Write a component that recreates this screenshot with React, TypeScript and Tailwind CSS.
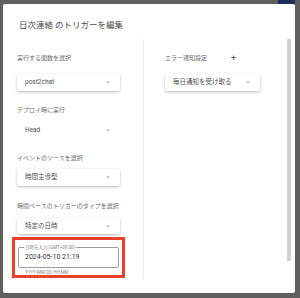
import React from 'react'

const font = { fontFamily: 'Roboto, "Noto Sans CJK JP", sans-serif' }

function Caret() {
  return (
    <svg width="4" height="3" viewBox="0 0 4 3" className="shrink-0">
      <path d="M0 0.5h4L2 2.5z" fill="#b4b4b4" />
    </svg>
  )
}

function Select({ value, className = '' }: { value: string; className?: string }) {
  return (
    <div
      className={`flex items-center justify-between rounded-[2px] bg-white pl-[8px] pr-[10px] shadow-[0_1px_3px_rgba(0,0,0,0.28)] ${className}`}
    >
      <span className="text-[6.5px] leading-none text-[#505050]">{value}</span>
      <Caret />
    </div>
  )
}

function Label({ children, className = '' }: { children: React.ReactNode; className?: string }) {
  return <div className={`h-[8px] text-[6px] leading-[8px] text-[#6a6a6a] ${className}`}>{children}</div>
}

export default function App() {
  return (
    <div className="h-[298px] w-[300px] overflow-hidden bg-[#5f5f5f]" style={font}>
      <div className="flex h-[4px] justify-end pr-[5px]">
        <div className="h-[4px] w-[17px] bg-[#1c2f5a]" />
      </div>
      <div className="ml-[3px] flex h-[289px] w-[292px] flex-col rounded-[2px] bg-white">
        <h1 className="ml-[16px] mt-[15px] h-[12px] text-[8.5px] leading-[12px] text-[#4a4a4a]">
          日次連絡 のトリガーを編集
        </h1>

        <div className="mt-[8px] flex">
          {/* left column */}
          <div className="flex w-[140px] flex-col pl-[14px]">
            <Label className="mt-[15px]">実行する関数を選択</Label>
            <Select value="post2chat" className="mt-[12px] h-[17px] w-[103px]" />

            <Label className="mt-[15px]">デプロイ時に実行</Label>
            <div className="mt-[8px] flex h-[17px] w-[103px] items-center justify-between pl-[8px] pr-[10px]">
              <span className="text-[6.5px] leading-none text-[#505050]">Head</span>
              <Caret />
            </div>

            <Label className="mt-[15px]">イベントのソースを選択</Label>
            <Select value="時間主導型" className="mt-[7px] h-[17px] w-[103px]" />

            <Label className="mt-[16px]">時間ベースのトリガーのタイプを選択</Label>
            <Select value="特定の日時" className="mt-[8px] h-[16px] w-[103px]" />

            <div className="-ml-[5px] mt-[3px] w-[113px] border-[3px] border-[#e8422c] px-[3px] pt-[7px]">
              <div className="relative flex h-[21px] items-center rounded-[2px] border border-[#9e9e9e] pl-[6px]">
                <span className="absolute -top-[3px] left-[5px] bg-white px-[1px] text-[4.5px] leading-[5px] text-[#888]">
                  日時を入力 (GMT+09:00)
                </span>
                <span className="text-[7px] leading-none text-[#333]">2024-05-10 21:19</span>
              </div>
              <div className="ml-[7px] mt-[2px] h-[5px] text-[4.5px] leading-[5px] text-[#888]">
                YYYY-MM-DD HH:MM
              </div>
            </div>
          </div>

          <div className="h-[240px] w-px bg-[#ececec]" />

          {/* right column */}
          <div className="flex w-[116px] flex-col pl-[21px]">
            <div className="mt-[15px] flex h-[8px] items-center">
              <Label>エラー通知設定</Label>
              <span className="ml-[24px] text-[9px] leading-none text-[#555]">+</span>
            </div>
            <Select value="毎日通知を受け取る" className="mt-[12px] h-[17px] w-[95px]" />
          </div>

          <div className="ml-auto mr-[4px] h-[222px] w-[4px] bg-[#d2d2d2]" />
        </div>
      </div>
    </div>
  )
}
